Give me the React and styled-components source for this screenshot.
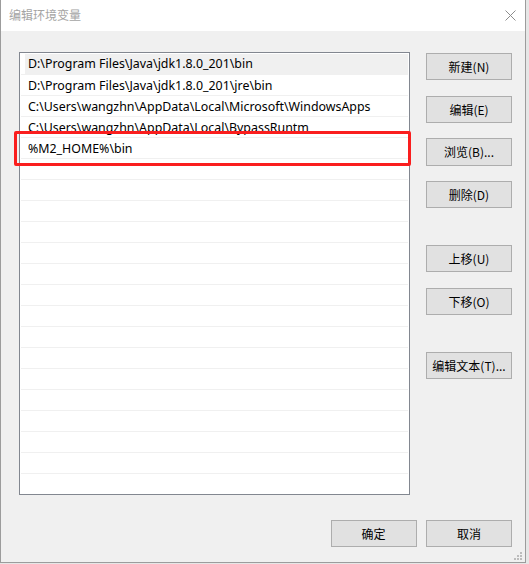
import React from "react";
import styled, { createGlobalStyle } from "styled-components";

const GlobalStyle = createGlobalStyle`
  html, body { margin: 0; padding: 0; background: #e4e4e4; }
  body { font-family: "Noto Sans", "Noto Sans CJK SC", sans-serif; }
  #root { width: 529px; height: 564px; overflow: hidden; }
`;

const Desktop = styled.div`
  width: 529px;
  height: 564px;
  background: #e6e6e6;
`;

const Window = styled.div`
  position: relative;
  box-sizing: border-box;
  width: 526px;
  height: 563px;
  border: 1px solid #9c9c9c;
  border-top: none;
  background: #f0f0f0;
  display: flex;
  flex-direction: column;
`;

const TitleBar = styled.div`
  height: 31px;
  flex: none;
  background: #ffffff;
  display: flex;
  align-items: center;
  justify-content: space-between;
  padding: 0 9px 0 8px;
`;

const Title = styled.div`
  font-family: "Noto Sans CJK SC", sans-serif;
  font-size: 12px;
  color: #a4a4a4;
  line-height: 12px;
  margin-top: -1px;
`;

const CloseIcon = () => (
  <svg width="11" height="11" viewBox="0 0 11 11" style={{ marginTop: "-1px" }}>
    <path d="M0.5 0.5 L10.5 10.5 M10.5 0.5 L0.5 10.5" stroke="#8c8c8c" strokeWidth="1" fill="none" />
  </svg>
);

const Body = styled.div`
  flex: 1;
  display: flex;
  flex-direction: column;
  padding: 21px 13px 0 18px;
`;

const Main = styled.div`
  display: flex;
  align-items: flex-start;
  gap: 16px;
`;

const ListBox = styled.div`
  box-sizing: border-box;
  width: 391px;
  border: 1px solid #828790;
  background: #ffffff;
  display: flex;
  flex-direction: column;
`;

const Row = styled.div`
  box-sizing: border-box;
  height: 21px;
  margin: 0 1px;
  border-top: 1px solid ${(p) => (p.$first ? "transparent" : "#f0f0f0")};
  background: ${(p) => (p.$selected ? "#f0f0f0" : "transparent")};
  background-clip: content-box;
  padding-left: ${(p) => (p.$selected ? "4px" : "0")};
  display: flex;
  align-items: center;
  font-family: "Noto Sans", "Noto Sans CJK SC", sans-serif;
  font-size: 12.4px;
  color: #000;
  white-space: nowrap;
  overflow: hidden;
`;

const RowText = styled.span`
  padding-left: ${(p) => (p.$selected ? "3px" : "7px")};
  margin-top: ${(p) => (p.$first ? "-1px" : "0")};
`;

const SideButtons = styled.div`
  display: flex;
  flex-direction: column;
  gap: 15.33px;
  margin-top: 1px;
`;

const Spacer = styled.div`
  height: 5.99px;
`;

const Button = styled.button`
  box-sizing: border-box;
  width: 86px;
  height: 27.33px;
  background: #e1e1e1;
  border: 1px solid #adadad;
  border-radius: 0;
  padding: 0;
  font-family: "Noto Sans CJK SC", sans-serif;
  font-size: 12px;
  color: #000;
  display: flex;
  align-items: center;
  justify-content: center;
  cursor: default;
`;

const Footer = styled.div`
  display: flex;
  justify-content: flex-end;
  gap: 9.5px;
  margin-top: 24.5px;
`;

const Highlight = styled.div`
  position: absolute;
  left: 13px;
  top: 131px;
  width: 397px;
  height: 34.5px;
  box-sizing: border-box;
  border: 3.5px solid #fa1e1e;
  border-radius: 2px;
  pointer-events: none;
`;

const Grip = styled.svg`
  position: absolute;
  right: 2px;
  bottom: 1px;
`;

const paths = [
  "D:\\Program Files\\Java\\jdk1.8.0_201\\bin",
  "D:\\Program Files\\Java\\jdk1.8.0_201\\jre\\bin",
  "C:\\Users\\wangzhn\\AppData\\Local\\Microsoft\\WindowsApps",
  "C:\\Users\\wangzhn\\AppData\\Local\\BypassRuntm",
  "%M2_HOME%\\bin",
];

export default function App() {
  const rows = Array.from({ length: 21 }, (_, i) => paths[i] || "");
  return (
    <>
      <GlobalStyle />
      <Desktop>
        <Window>
          <TitleBar>
            <Title>编辑环境变量</Title>
            <CloseIcon />
          </TitleBar>
          <Body>
            <Main>
              <ListBox>
                {rows.map((t, i) => (
                  <Row key={i} $first={i === 0} $selected={i === 0}>
                    <RowText $selected={i === 0} $first={i === 0}>{t}</RowText>
                  </Row>
                ))}
              </ListBox>
              <SideButtons>
                <Button>新建(N)</Button>
                <Button>编辑(E)</Button>
                <Button>浏览(B)...</Button>
                <Button>删除(D)</Button>
                <Spacer />
                <Button>上移(U)</Button>
                <Button>下移(O)</Button>
                <Spacer />
                <Button>编辑文本(T)...</Button>
              </SideButtons>
            </Main>
            <Footer>
              <Button>确定</Button>
              <Button>取消</Button>
            </Footer>
          </Body>
          <Highlight />
          <Grip width="10" height="10" viewBox="0 0 10 10">
            <rect x="7" y="1" width="2" height="2" fill="#bcbcbc" />
            <rect x="4" y="4" width="2" height="2" fill="#bcbcbc" />
            <rect x="7" y="4" width="2" height="2" fill="#bcbcbc" />
            <rect x="1" y="7" width="2" height="2" fill="#bcbcbc" />
            <rect x="4" y="7" width="2" height="2" fill="#bcbcbc" />
            <rect x="7" y="7" width="2" height="2" fill="#bcbcbc" />
          </Grip>
        </Window>
      </Desktop>
    </>
  );
}
